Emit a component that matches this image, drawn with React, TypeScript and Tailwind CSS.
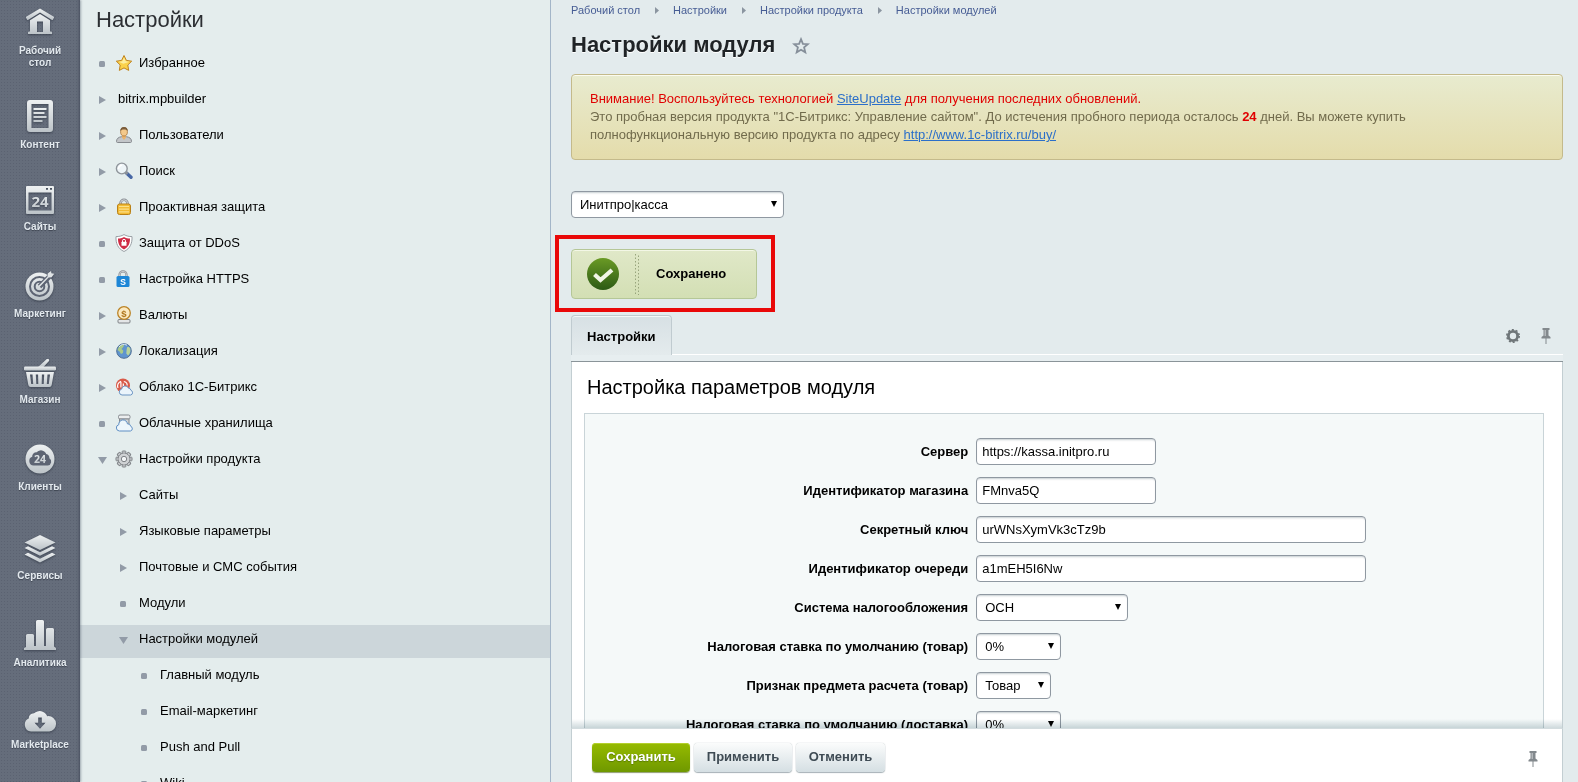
import type { ReactNode } from 'react';

/* ---------- left rail icons ---------- */

const RAIL = 'url(#railFill)';
const DARK = '#5d6473';

function RailSvg({ w, h, children }: { w: number; h: number; children: ReactNode }) {
  return (
    <svg width={w} height={h} viewBox={`0 0 ${w} ${h}`} fill={RAIL} className="mb-[7px] shrink-0 drop-shadow-[0_1px_1px_rgba(30,36,50,0.55)]" aria-hidden="true">
      {children}
    </svg>
  );
}

const HomeIcon = () => (
  <RailSvg w={28} h={30}>
    <path d="M14 0.5 0.500 8.600a1 1 0 0 0-.3 1.500l.8 1.300a1 1 0 0 0 1.400.3L14 4.500l11.600 7.200a1 1 0 0 0 1.400-.3l.8-1.300a1 1 0 0 0-.3-1.500Z" />
    <path fillRule="evenodd" d="M14 6 4 12.300V23.500H3a1 1 0 0 0-1 1V26h24v-1.500a1 1 0 0 0-1-1h-1V12.300ZM11 13.500h6V24h-6Z" />
  </RailSvg>
);

const ContentIcon = () => (
  <RailSvg w={26} h={32}>
    <path fillRule="evenodd" d="M3 0h20a3 3 0 0 1 3 3v26a3 3 0 0 1-3 3H3a3 3 0 0 1-3-3V3a3 3 0 0 1 3-3Zm1.500 4v24h17v-24Z" />
    <path d="M6.500 8h13v2h-13zM6.500 12h11v2h-11zM6.500 16h13v2h-13zM6.500 20h9v2h-9z" />
  </RailSvg>
);

const SitesIcon = () => (
  <RailSvg w={28} h={28}>
    <path fillRule="evenodd" d="M1 0h26a1 1 0 0 1 1 1v26a1 1 0 0 1-1 1H1a1 1 0 0 1-1-1V1a1 1 0 0 1 1-1Zm1.500 6.500v18h23v-18ZM20 2v1.800h2V2Zm4 0v1.800h2V2Z" />
    <text x="14" y="21" textAnchor="middle" fontFamily="Open Sans" fontWeight="700" fontSize="15">24</text>
  </RailSvg>
);

const MarketingIcon = () => (
  <RailSvg w={30} h={30}>
    <circle cx="14.500" cy="15.500" r="14" />
    <circle cx="14.500" cy="15.500" r="9.500" fill="none" stroke={DARK} strokeWidth="2" />
    <circle cx="14.500" cy="15.500" r="4.800" fill="none" stroke={DARK} strokeWidth="2" />
    <path d="M14.500 15.500 26 4" stroke={DARK} strokeWidth="5" />
    <path d="m13.300 15 9.200-9.300.2-3.200L26 0l.4 2.300 2.800.5-2.600 3.400-3 .3-9 9.400Z" fill="#dfe3e5" />
  </RailSvg>
);

const ShopIcon = () => (
  <RailSvg w={32} h={28}>
    <path d="M22.300.5a1.500 1.500 0 0 1 2.500 1.700L19.500 8H14Z" />
    <rect x="0" y="7.500" width="32" height="4" rx="1.200" />
    <path fillRule="evenodd" d="M2 13h28l-2.300 13a2.400 2.400 0 0 1-2.300 2H6.600a2.400 2.400 0 0 1-2.300-2Zm4 2.500 1.200 9.500h2L8.500 15.500Zm5.800 0 .5 9.500h2l-.2-9.500Zm6.100 0-.2 9.500h2l.5-9.500Zm5.600 0L22.800 25h2L26 15.500Z" />
  </RailSvg>
);

const ClientsIcon = () => (
  <RailSvg w={30} h={30}>
    <circle cx="15" cy="15" r="14.500" />
    <path d="M8.500 21.500a4.500 4.500 0 0 1-1.300-8.700 4.200 4.200 0 0 1 4.600-4.600 5.600 5.600 0 0 1 9.400 1.800 4.200 4.200 0 0 1 3.200 4.200 4 4 0 0 1-1.600 7.300Z" fill={DARK} />
    <text x="15" y="19" textAnchor="middle" fontFamily="Open Sans" fontWeight="700" fontSize="10.500">24</text>
  </RailSvg>
);

const ServicesIcon = () => (
  <RailSvg w={32} h={28}>
    <path d="M16 0 31.500 7.500 16 15 .5 7.500Z" />
    <path d="m.5 13 3.500-1.700L16 17.200l12-5.900 3.500 1.700L16 20.700Z" />
    <path d="m.5 19.500 3.500-1.700 12 5.900 12-5.900 3.500 1.700L16 27.500Z" />
  </RailSvg>
);

const AnalyticsIcon = () => (
  <RailSvg w={32} h={30}>
    <path d="M2 27V15.500A1.500 1.500 0 0 1 3.500 14h5a1.500 1.500 0 0 1 1.500 1.500V26h2V1.500A1.500 1.500 0 0 1 13.500 0h5A1.500 1.500 0 0 1 20 1.500V26h2V9.500A1.500 1.500 0 0 1 23.500 8h5A1.500 1.500 0 0 1 30 9.500V26.500l2 1.500v2H0v-2Z" />
  </RailSvg>
);

const MarketIcon = () => (
  <RailSvg w={32} h={23}>
    <path fillRule="evenodd" d="M7 22.500A6.800 6.800 0 0 1 4.700 9.600 5.600 5.600 0 0 1 10 4.300 8.200 8.200 0 0 1 23.200 7.200 7.600 7.600 0 0 1 32 14.800a7.500 7.500 0 0 1-6.800 7.700Zm7.200-14v5.200H10.500L16 19.700l5.500-6h-3.700V8.500Z" />
  </RailSvg>
);

const railItems: { label: string; icon: ReactNode; size: string }[] = [
  { label: 'Рабочий стол', icon: <HomeIcon />, size: 'h-[69px]' },
  { label: 'Контент', icon: <ContentIcon />, size: 'h-[82px]' },
  { label: 'Сайты', icon: <SitesIcon />, size: 'h-[82px]' },
  { label: 'Маркетинг', icon: <MarketingIcon />, size: 'h-[87px]' },
  { label: 'Магазин', icon: <ShopIcon />, size: 'h-[86px]' },
  { label: 'Клиенты', icon: <ClientsIcon />, size: 'h-[87px]' },
  { label: 'Сервисы', icon: <ServicesIcon />, size: 'h-[89px]' },
  { label: 'Аналитика', icon: <AnalyticsIcon />, size: 'h-[87px]' },
  { label: 'Marketplace', icon: <MarketIcon />, size: 'h-[82px]' },
];

/* ---------- tree icons ---------- */

const T = ({ children }: { children: ReactNode }) => (
  <svg width="18" height="18" viewBox="0 0 18 18" className="shrink-0" aria-hidden="true">
    {children}
  </svg>
);

const StarIcon = () => (
  <T>
    <path d="m9 1.500 2.400 4.900 5.300.8-3.900 3.800.9 5.400L9 13.900l-4.700 2.500.9-5.400-3.900-3.800 5.300-.8Z" fill="#fbd24a" stroke="#c08420" strokeLinejoin="round" />
    <path d="m9 3.500 1.700 3.700 3.700.6-6 2-4.700-2 3.600-.6Z" fill="#fdeea0" />
  </T>
);
const UserIcon = () => (
  <T>
    <path d="M1.500 15.500c0-3 2-4.300 5-4.800h5c3 .5 5 1.800 5 4.800 0 .6-.5 1-1 1h-13c-.6 0-1-.4-1-1Z" fill="#c3c6c9" stroke="#85898e" />
    <path d="M7 9h4v2.500l-2 2.500-2-2.500Z" fill="#e9b36e" />
    <ellipse cx="9" cy="5.800" rx="3.400" ry="4.200" fill="#f4c98b" stroke="#a9743a" strokeWidth=".8" />
    <path d="M5.400 5C5 2.500 6.700.9 9 .9s4 1.600 3.600 4.100C12 3.900 11 3.400 9 3.400S6 3.900 5.400 5Z" fill="#7a5d3c" />
  </T>
);
const SearchIcon = () => (
  <T>
    <path d="m11.500 11 4.500 4.300" stroke="#4767a5" strokeWidth="3.400" strokeLinecap="round" />
    <path d="m10.500 10 2 2" stroke="#8d9298" strokeWidth="2.500" />
    <circle cx="6.800" cy="6.500" r="5.400" fill="#eef5f8" stroke="#8f959b" strokeWidth="1.400" />
    <path d="M3.500 7A3.500 3.500 0 0 1 7 3.300" stroke="#fff" strokeWidth="1.500" fill="none" />
  </T>
);
const LockIcon = () => (
  <T>
    <path d="M5.500 8V5.300a3.500 3.500 0 0 1 7 0V8" fill="none" stroke="#8b9096" strokeWidth="2.600" />
    <path d="M5.500 8V5.300a3.500 3.500 0 0 1 7 0V8" fill="none" stroke="#d5d8da" strokeWidth="1" />
    <rect x="2.500" y="6" width="13" height="10.500" rx="2" fill="#f2bb34" stroke="#b98118" />
    <path d="M4 8.500h10M4 11.200h10M4 13.900h10" stroke="#fbe08a" strokeWidth="1.200" />
  </T>
);
const ShieldIcon = () => (
  <T>
    <path d="M9 .6c2.500 1.400 5 2 8 2 .4 6.500-1.800 12-8 14.900C2.800 14.600.6 9.100 1 2.600c3 0 5.500-.6 8-2Z" fill="#fff" stroke="#9aa0a5" />
    <path d="M9 2.900c2 1 3.800 1.500 6 1.600.1 4.900-1.600 8.800-6 11-4.400-2.200-6.100-6.100-6-11 2.200-.1 4-.6 6-1.600Z" fill="#cf2c45" />
    <path d="M7.500 8V6.800a1.500 1.500 0 0 1 3 0V8" fill="none" stroke="#fff" />
    <rect x="6.500" y="7.800" width="5" height="4" rx=".5" fill="#fff" />
  </T>
);
const HttpsIcon = () => (
  <T>
    <path d="M4.500 7V4.800a3.500 3.500 0 0 1 7 0V7" fill="none" stroke="#8b9096" strokeWidth="2.200" />
    <path d="M4.500 7V4.800a3.500 3.500 0 0 1 7 0V7" fill="none" stroke="#d5d8da" strokeWidth=".8" />
    <rect x="1.500" y="6" width="13" height="11" rx="1.500" fill="#1d86d6" />
    <text x="8" y="14.700" textAnchor="middle" fontFamily="Liberation Sans" fontWeight="700" fontSize="8.500" fill="#fff">S</text>
  </T>
);
const CoinIcon = () => (
  <T>
    <rect x="3" y="13.500" width="12" height="3.500" rx="1" fill="#e4e6e7" stroke="#7e8286" />
    <circle cx="9" cy="7" r="6.300" fill="#fbe9c0" stroke="#bb8326" strokeWidth="1.300" />
    <text x="9" y="10.500" textAnchor="middle" fontFamily="Liberation Sans" fontWeight="700" fontSize="9.500" fill="#b0761c">$</text>
  </T>
);
const GlobeIcon = () => (
  <T>
    <circle cx="9" cy="9" r="7.300" fill="#5f94cf" stroke="#4f6f95" />
    <path d="M4 4.500c2-1.800 4-2 5-1.500l-.7 2L6.500 7l1.800 1.500-.3 2.500-2 1L4.500 9.500 2.500 8Z" fill="#a9c98a" />
    <path d="M12 5.500c1.500-1 2.500-.5 3.300 1.500.5 3-.8 5.500-2.300 6.500l-1.700-2 .2-2.500Z" fill="#b9d39a" />
    <path d="M4 5a6.500 6.500 0 0 1 8-1.800" stroke="#d7e7f6" fill="none" />
  </T>
);
const CloudBxIcon = () => (
  <T>
    <circle cx="8" cy="7.500" r="7" fill="#d95a49" />
    <path d="M3 10a5 5 0 0 1 3-6.800M5.900 9.500V3.800M8.800 3.500a4 4 0 0 1 3.400 4M8.300 5.500V11" stroke="#fff" strokeWidth="1.200" fill="none" />
    <path d="M7 17a3 3 0 0 1-.4-5.900 3.600 3.600 0 0 1 6.900-.9 2.700 2.700 0 0 1 2.500 2.200A2.400 2.400 0 0 1 15.700 17Z" fill="#eaf4fb" stroke="#6b94c2" />
  </T>
);
const StorageIcon = () => (
  <T>
    <rect x="3.500" y="1" width="11.500" height="4" rx="1.500" fill="#eceeef" stroke="#84898e" />
    <path d="M4.500 5H14v5.500H4.500z" fill="#cfd3d6" stroke="#84898e" />
    <path d="M4.400 17a3.200 3.200 0 0 1-.6-6.300 4.300 4.300 0 0 1 8.600-.9 3.200 3.200 0 0 1 3.400 2.600A2.400 2.400 0 0 1 15.400 17Z" fill="#edf6fc" stroke="#5f8fc4" />
  </T>
);
const teeth = [0, 45, 90, 135, 180, 225, 270, 315];
const GearIcon = () => (
  <T>
    <g stroke="#7e8286" fill="#c9cccf">
      {teeth.map((a) => (
        <rect key={a} x="7.200" y="1" width="3.600" height="4" rx=".6" transform={`rotate(${a} 9 9)`} />
      ))}
      <circle cx="9" cy="9" r="5.900" />
    </g>
    <circle cx="9" cy="9" r="5.400" fill="#cfd2d4" />
    <circle cx="9" cy="9" r="2.700" fill="#f2f5f6" stroke="#7e8286" />
  </T>
);

type Mark = 'dot' | 'right' | 'down';
type Row = { label: string; mark: Mark; level: 0 | 1 | 2; icon?: ReactNode; active?: boolean };

const rows: Row[] = [
  { label: 'Избранное', mark: 'dot', level: 0, icon: <StarIcon /> },
  { label: 'bitrix.mpbuilder', mark: 'right', level: 0 },
  { label: 'Пользователи', mark: 'right', level: 0, icon: <UserIcon /> },
  { label: 'Поиск', mark: 'right', level: 0, icon: <SearchIcon /> },
  { label: 'Проактивная защита', mark: 'right', level: 0, icon: <LockIcon /> },
  { label: 'Защита от DDoS', mark: 'dot', level: 0, icon: <ShieldIcon /> },
  { label: 'Настройка HTTPS', mark: 'dot', level: 0, icon: <HttpsIcon /> },
  { label: 'Валюты', mark: 'right', level: 0, icon: <CoinIcon /> },
  { label: 'Локализация', mark: 'right', level: 0, icon: <GlobeIcon /> },
  { label: 'Облако 1С-Битрикс', mark: 'right', level: 0, icon: <CloudBxIcon /> },
  { label: 'Облачные хранилища', mark: 'dot', level: 0, icon: <StorageIcon /> },
  { label: 'Настройки продукта', mark: 'down', level: 0, icon: <GearIcon /> },
  { label: 'Сайты', mark: 'right', level: 1 },
  { label: 'Языковые параметры', mark: 'right', level: 1 },
  { label: 'Почтовые и СМС события', mark: 'right', level: 1 },
  { label: 'Модули', mark: 'dot', level: 1 },
  { label: 'Настройки модулей', mark: 'down', level: 1, active: true },
  { label: 'Главный модуль', mark: 'dot', level: 2 },
  { label: 'Email-маркетинг', mark: 'dot', level: 2 },
  { label: 'Push and Pull', mark: 'dot', level: 2 },
  { label: 'Wiki', mark: 'dot', level: 2 },
];

const indent = ['pl-[17px]', 'pl-[38px]', 'pl-[59px]'];

function Marker({ mark }: { mark: Mark }) {
  return (
    <svg width="10" height="10" viewBox="0 0 10 10" fill="#929ba7" className="mt-[2px] shrink-0" aria-hidden="true">
      {mark === 'dot' && <rect x="2" y="2" width="6" height="6" rx="1.500" />}
      {mark === 'right' && <path d="M2 1v8l7-4Z" />}
      {mark === 'down' && <path d="M1 2h9L5.500 9Z" />}
    </svg>
  );
}

function TreeRow({ row }: { row: Row }) {
  return (
    <li>
      <a
        href="#"
        className={`flex h-[33px] items-center pb-[5px] text-[13px] leading-[18px] text-black ${indent[row.level]} ${row.active ? 'bg-[#ccd6da]' : ''}`}
      >
        <Marker mark={row.mark} />
        {row.icon && <span className="ml-2">{row.icon}</span>}
        <span className={row.icon ? 'ml-[6px]' : 'ml-[11px]'}>{row.label}</span>
      </a>
    </li>
  );
}

/* ---------- main area ---------- */

const crumbs = ['Рабочий стол', 'Настройки', 'Настройки продукта', 'Настройки модулей'];

function Pin() {
  return (
    <svg width="10" height="16" viewBox="0 0 10 16" fill="#83898d" aria-hidden="true">
      <path d="M1.500 0h7v2h-1v5.500L9.500 9v1.500h-4V16h-1v-5.500h-4V9l2-1.500V2h-1Z" />
      <path d="M3.500 2H5v6H3.500Z" fill="#b3b8bb" />
    </svg>
  );
}

const control =
  'h-[27px] w-full appearance-none rounded-[4px] border border-[#8f98a1] bg-white text-[13px] text-black shadow-[inset_0_2px_2px_-1px_rgba(160,172,178,0.6)] outline-none';

function Dropdown({ id, value, width, label }: { id: string; value: string; width: string; label?: string }) {
  return (
    <div className={`relative ${width}`}>
      <select id={id} aria-label={label} defaultValue={value} className={`${control} block pl-2 pr-6`}>
        <option>{value}</option>
      </select>
      <svg width="6" height="6" viewBox="0 0 6 6" className="pointer-events-none absolute right-[7px] top-[10px]" aria-hidden="true">
        <path d="M0 0h6L3 6Z" />
      </svg>
    </div>
  );
}

type Field = { id: string; label: string; value: string; width: string; kind: 'input' | 'select' };

const fields: Field[] = [
  { id: 'server', label: 'Сервер', value: 'https://kassa.initpro.ru', width: 'w-[180px]', kind: 'input' },
  { id: 'shop', label: 'Идентификатор магазина', value: 'FMnva5Q', width: 'w-[180px]', kind: 'input' },
  { id: 'secret', label: 'Секретный ключ', value: 'urWNsXymVk3cTz9b', width: 'w-[390px]', kind: 'input' },
  { id: 'queue', label: 'Идентификатор очереди', value: 'a1mEH5I6Nw', width: 'w-[390px]', kind: 'input' },
  { id: 'tax', label: 'Система налогообложения', value: 'ОСН', width: 'w-[152px]', kind: 'select' },
  { id: 'rate', label: 'Налоговая ставка по умолчанию (товар)', value: '0%', width: 'w-[85px]', kind: 'select' },
  { id: 'subject', label: 'Признак предмета расчета (товар)', value: 'Товар', width: 'w-[75px]', kind: 'select' },
  { id: 'delivery', label: 'Налоговая ставка по умолчанию (доставка)', value: '0%', width: 'w-[85px]', kind: 'select' },
];

function Notice() {
  return (
    <div className="mt-4 rounded-[4px] border border-[#c4ba8b] bg-linear-to-b from-[#e8ebcf] to-[#e4dcab] px-[18px] py-[15px] text-[13px] leading-[18px] text-[#716b4c] shadow-[inset_0_1px_0_#fbfbf0]">
      <p className="text-[#e00000]">
        Внимание! Воспользуйтесь технологией{' '}
        <a href="#" className="text-[#2b6fc9] underline">SiteUpdate</a> для получения последних обновлений.
      </p>
      <p>
        Это пробная версия продукта "1С-Битрикс: Управление сайтом". До истечения пробного периода осталось{' '}
        <b className="text-[#e00000]">24</b> дней. Вы можете купить полнофункциональную версию продукта по адресу{' '}
        <a href="#" className="text-[#2b6fc9] underline">http://www.1c-bitrix.ru/buy/</a>
      </p>
    </div>
  );
}

function SavedMessage() {
  return (
    <div className="relative mt-[31px] w-fit">
      <div className="flex h-[50px] w-[186px] items-center rounded-[4px] border border-[#b5c797] bg-linear-to-b from-[#e0e8c8] to-[#d3dfb4] pl-[15px] shadow-[inset_0_1px_0_#f3f7e6]">
        <svg width="32" height="32" viewBox="0 0 32 32" aria-hidden="true">
          <circle cx="16" cy="16" r="16" fill="url(#okFill)" />
          <path d="m7.500 16.500 6 5.500L25 12" fill="none" stroke="#f1f5e6" strokeWidth="4.200" />
        </svg>
        <svg width="5" height="42" viewBox="0 0 5 42" className="ml-4" aria-hidden="true">
          <path d="M.5 1v41M3.500 2.500V42" stroke="#98a57c" strokeDasharray="1.500 2" />
        </svg>
        <b className="ml-4 text-[13px] text-black">Сохранено</b>
      </div>
      <div className="pointer-events-none absolute -bottom-[13px] -left-4 -right-[18px] -top-[14px] border-4 border-[#e90808]" />
    </div>
  );
}

const plainButton =
  'h-[29px] rounded-[4px] bg-linear-to-b from-[#fbfcfc] to-[#d5dfe3] text-[13px] font-bold text-[#3f4b54] shadow-[0_0_1px_rgba(90,110,120,0.6),0_1px_1px_rgba(90,110,120,0.5)]';

export default function App() {
  return (
    <div className="flex h-screen overflow-hidden bg-[#e3ebed] font-['Liberation_Sans',Arial,sans-serif]">
      <svg width="0" height="0" className="absolute" aria-hidden="true">
        <defs>
          <linearGradient id="railFill" x1="0" y1="0" x2="0" y2="1">
            <stop offset="0" stopColor="#eef1f2" />
            <stop offset="1" stopColor="#bcc3c8" />
          </linearGradient>
          <linearGradient id="okFill" x1="0" y1="0" x2="0" y2="1">
            <stop offset="0" stopColor="#6a9a25" />
            <stop offset="1" stopColor="#2c5a15" />
          </linearGradient>
        </defs>
      </svg>

      <nav className="z-10 w-20 shrink-0 overflow-hidden bg-[#656d7b] bg-[radial-gradient(#5b6271_1px,transparent_1px)] bg-[size:3px_3px] shadow-[inset_-3px_0_3px_-2px_#4a5160,1px_0_2px_rgba(90,100,115,0.5)]">
        {railItems.map((item) => (
          <a key={item.label} href="#" className={`flex flex-col items-center justify-end ${item.size}`}>
            {item.icon}
            <span className="flex flex-col items-center text-[10px] font-bold leading-3 text-[#e3e9ee] [text-shadow:0_1px_1px_#3d4450]">
              {item.label.split(' ').map((word) => (
                <span key={word}>{word}</span>
              ))}
            </span>
          </a>
        ))}
      </nav>

      <aside className="w-[471px] shrink-0 overflow-hidden border-r border-[#a3b5c8] bg-[#e4eded]">
        <h2 className="pl-4 pt-2 text-[22px] leading-6 text-[#2c2f33]">Настройки</h2>
        <ul className="mt-[17px] flex flex-col gap-[3px]">
          {rows.map((row) => (
            <TreeRow key={row.label} row={row} />
          ))}
        </ul>
      </aside>

      <main className="flex min-w-0 flex-1 flex-col pl-5 pr-[15px]">
        <div className="min-h-0 flex-1 overflow-x-visible overflow-y-clip">
          <div className="flex items-center pt-1 text-[11px] leading-3 text-[#465c94]">
            {crumbs.map((crumb, i) => (
              <span key={crumb} className="flex items-center">
                {i > 0 && (
                  <svg width="5" height="7" viewBox="0 0 5 7" fill="#8b95a0" className="mx-[14px]" aria-hidden="true">
                    <path d="M1 0v7l4-3.500Z" />
                  </svg>
                )}
                <a href="#">{crumb}</a>
              </span>
            ))}
          </div>

          <div className="mt-4 flex items-center gap-[17px]">
            <h1 className="text-[22px] font-bold leading-[26px] text-[#1f2326] [text-shadow:0_1px_0_#fff]">Настройки модуля</h1>
            <button type="button" aria-label="Добавить в избранное" className="mt-[2px]">
              <svg width="18" height="18" viewBox="0 0 18 18" fill="none" stroke="#868f9a" strokeWidth="1.800" aria-hidden="true">
                <path d="m9 2.200 1.900 4.600 5 .4-3.800 3.200 1.200 4.900L9 12.700l-4.300 2.600 1.200-4.900-3.800-3.200 5-.4Z" />
              </svg>
            </button>
          </div>

          <Notice />

          <div className="mt-[31px]">
            <Dropdown id="module" label="Модуль" value="Инитпро|касса" width="w-[213px]" />
          </div>

          <SavedMessage />

          <div className="mt-4 flex items-stretch justify-between">
            <button
              type="button"
              className="h-10 rounded-t-[4px] border border-b-0 border-[#c0cbd0] bg-linear-to-b from-[#d7e0e4] to-[#e4ebed] px-[15px] pt-[2px] text-[13px] font-bold text-black shadow-[inset_0_1px_0_#f4f8f8]"
            >
              Настройки
            </button>
            <div className="flex flex-1 items-center justify-end gap-[21px] border-b border-[#fff] pr-3 pt-[3px]">
              <button type="button" aria-label="Настроить">
                <svg width="14" height="14" viewBox="0 0 14 14" fill="none" stroke="#6f7679" aria-hidden="true">
                  <circle cx="7" cy="7" r="4.600" strokeWidth="2.800" />
                  <circle cx="7" cy="7" r="6.200" strokeWidth="1.600" strokeDasharray="2 1.900" />
                </svg>
              </button>
              <button type="button" aria-label="Закрепить вкладки">
                <Pin />
              </button>
            </div>
          </div>
          <div className="h-[7px] border-b border-[#8a9499] bg-[#e7eef0]" />

          <section className="border-x border-[#c3ced2] bg-white pl-3 pr-[18px]">
            <h2 className="pb-[14px] pl-[3px] pt-[13px] text-[20px] leading-6 text-black">Настройка параметров модуля</h2>
            <form id="options" className="flex flex-col gap-3 border border-[#c9d4d8] bg-[#f5f9f9] py-6">
              {fields.map((f) => (
                <div key={f.id} className="flex items-center">
                  <label htmlFor={f.id} className="w-[40%] shrink-0 text-right text-[13px] font-bold text-black">
                    {f.label}
                  </label>
                  <div className="pl-2">
                    {f.kind === 'input' ? (
                      <div className={f.width}>
                        <input id={f.id} type="text" defaultValue={f.value} className={`${control} block px-[5px]`} />
                      </div>
                    ) : (
                      <Dropdown id={f.id} value={f.value} width={f.width} />
                    )}
                  </div>
                </div>
              ))}
            </form>
          </section>
        </div>

        <footer className="relative flex h-[54px] shrink-0 items-center justify-between border-x border-t border-[#c3ced2] border-t-[#d3dcdf] bg-white pl-5 pr-6">
          <div className="pointer-events-none absolute inset-x-0 -top-[10px] h-[9px] bg-linear-to-b from-white to-[#cfdadd] mix-blend-multiply" />
          <div className="flex gap-1 pt-[3px]">
            <button
              type="submit"
              form="options"
              className="h-[29px] w-[98px] rounded-[4px] bg-linear-to-b from-[#96bb00] to-[#6f9800] text-[13px] font-bold text-white shadow-[inset_0_1px_0_#b4d02c,0_1px_1px_rgba(70,90,20,0.6)] [text-shadow:0_1px_1px_#5a7c00]"
            >
              Сохранить
            </button>
            <button type="button" className={`${plainButton} w-[98px]`}>Применить</button>
            <button type="button" className={`${plainButton} w-[89px]`}>Отменить</button>
          </div>
          <button type="button" aria-label="Закрепить панель" className="mt-[7px]">
            <Pin />
          </button>
        </footer>
      </main>
    </div>
  );
}
